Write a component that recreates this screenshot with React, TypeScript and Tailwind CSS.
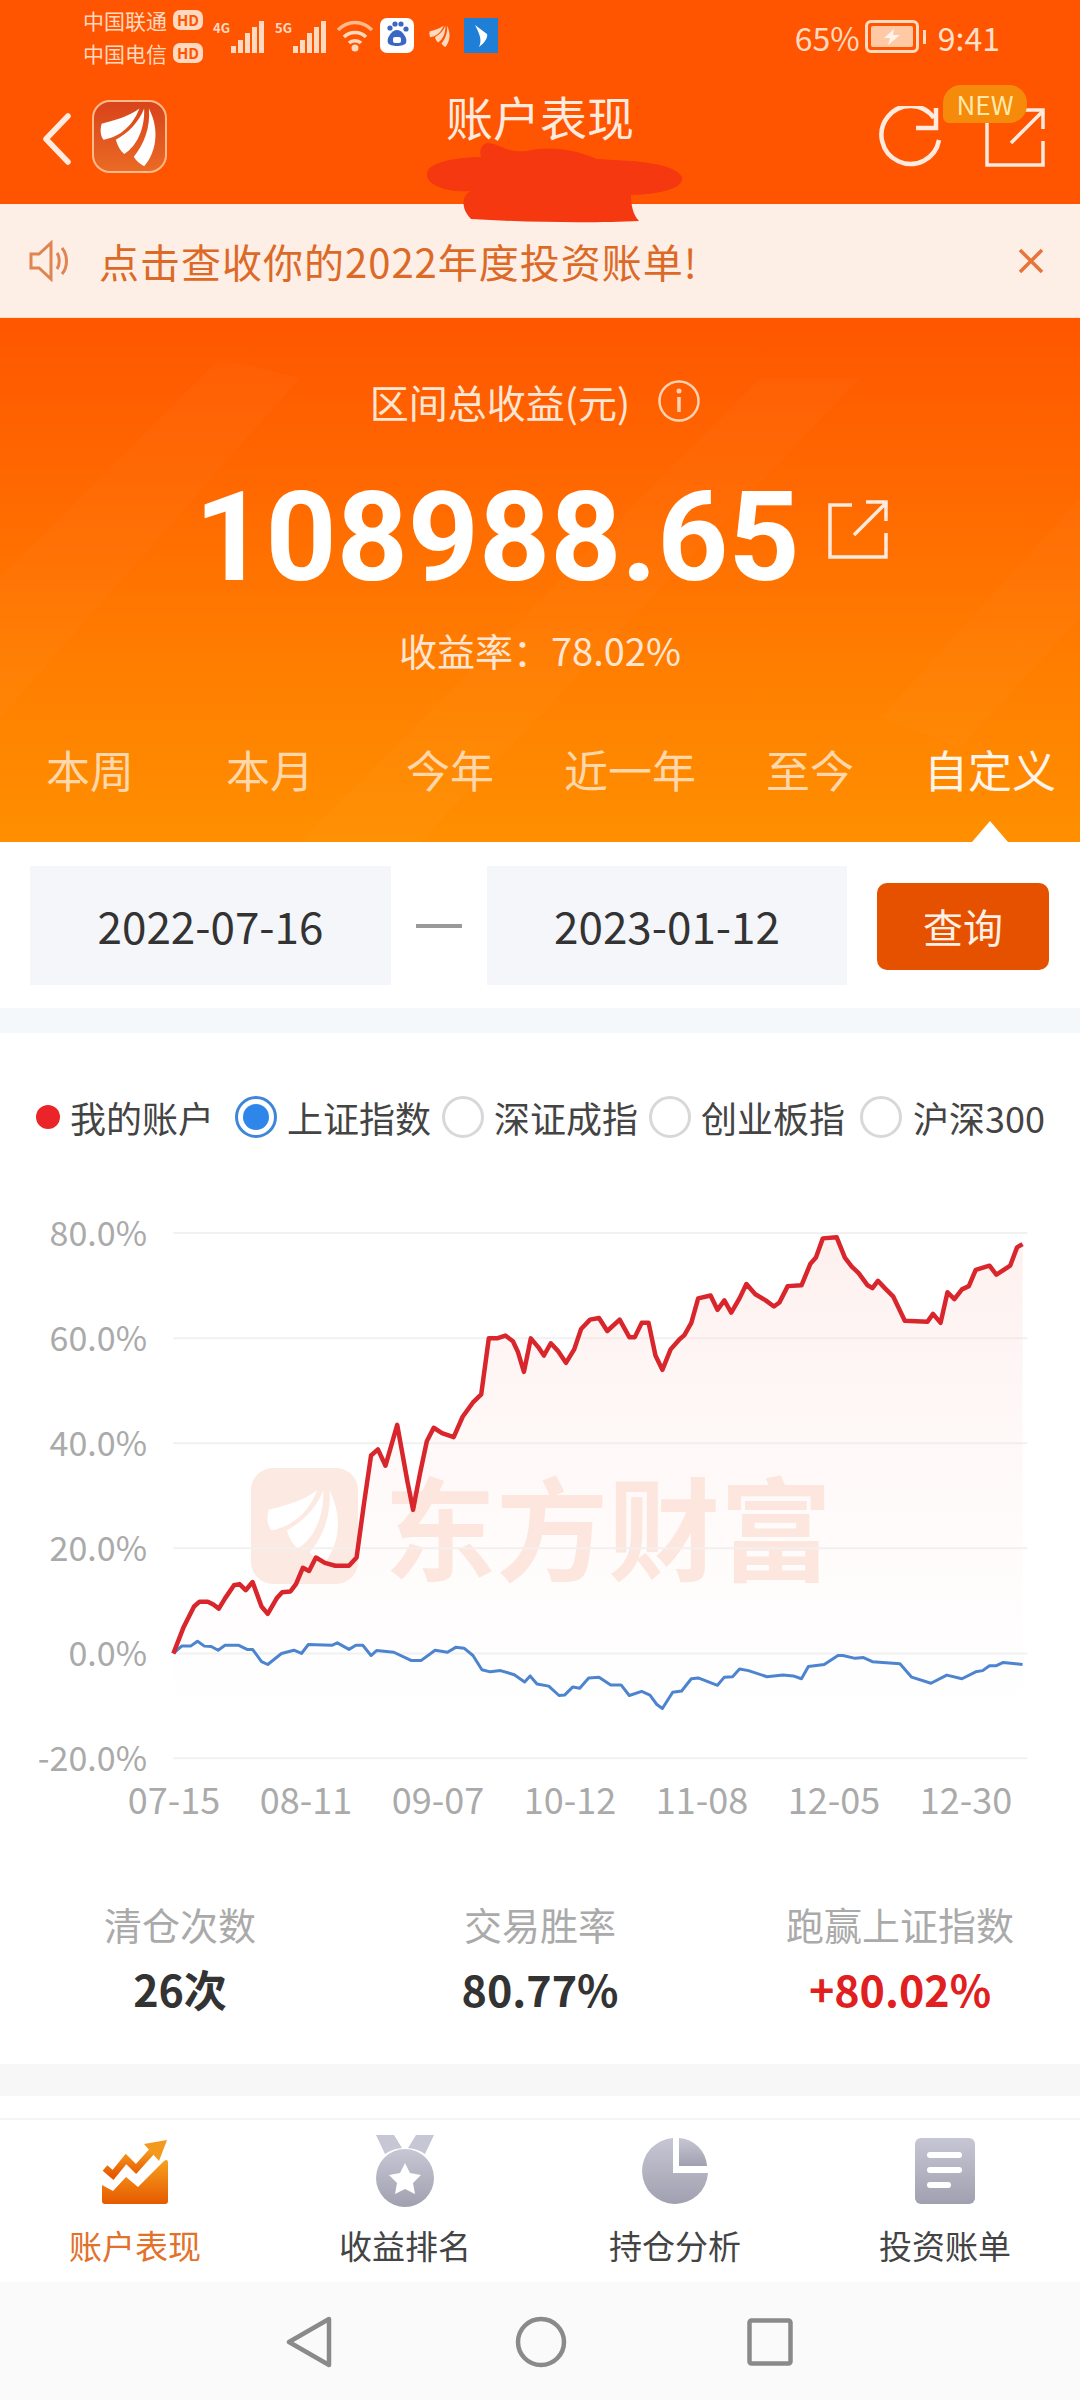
import React from "react";

const RED =
  "250,1160 265,1095 280,1045 288,1033 300,1033 308,1040 316,1050 325,1025 338,993 346,990 355,1005 365,985 378,1045 387,1063 400,1025 408,1010 420,1008 428,990 438,950 447,958 457,925 470,938 485,945 505,945 516,925 527,790 537,675 547,660 558,700 575,600 590,740 598,808 608,720 618,640 628,607 640,620 657,630 670,580 685,545 697,525 708,388 720,388 732,381 743,395 750,420 759,470 769,388 780,410 788,430 798,400 808,418 820,448 832,415 842,365 855,342 868,338 880,370 898,342 912,385 920,385 930,350 940,350 950,430 960,465 972,415 985,390 992,380 1002,350 1012,290 1030,283 1040,318 1050,295 1060,325 1072,290 1082,255 1095,280 1110,295 1122,310 1130,300 1142,260 1162,258 1175,205 1183,190 1193,143 1213,140 1225,190 1235,212 1245,228 1258,258 1265,265 1273,247 1283,265 1295,285 1312,345 1345,347 1353,328 1364,350 1374,275 1384,292 1395,268 1405,260 1415,220 1435,210 1445,232 1465,210 1475,165 1483,157";
const BLUE =
  "250,1160 262,1142 275,1142 285,1130 295,1142 305,1143 315,1152 325,1140 345,1140 357,1150 365,1150 378,1180 387,1187 407,1160 425,1152 436,1160 446,1138 480,1140 488,1134 505,1150 515,1140 525,1140 537,1165 545,1153 570,1157 595,1177 610,1177 630,1152 648,1157 660,1145 672,1147 685,1165 698,1200 710,1205 725,1202 745,1212 760,1230 768,1215 778,1235 795,1240 810,1263 818,1262 830,1242 840,1245 853,1220 868,1218 885,1237 900,1237 912,1263 930,1253 942,1262 952,1285 960,1295 975,1255 988,1252 1002,1222 1012,1220 1040,1238 1050,1218 1062,1217 1072,1198 1085,1202 1112,1217 1135,1213 1150,1215 1162,1222 1172,1192 1195,1187 1215,1165 1222,1165 1240,1172 1252,1170 1265,1180 1305,1185 1322,1218 1350,1233 1373,1213 1395,1222 1415,1205 1425,1202 1435,1190 1445,1190 1455,1182 1483,1187";

const PERIODS = ["本周", "本月", "今年", "近一年", "至今", "自定义"];
const Y_LABELS = ["80.0%", "60.0%", "40.0%", "20.0%", "0.0%", "-20.0%"];
const X_LABELS = ["07-15", "08-11", "09-07", "10-12", "11-08", "12-05", "12-30"];
const GRID = [130, 388, 645, 902, 1160, 1417];

function Signal() {
  return (
    <svg width="33" height="32" viewBox="0 0 33 32" fill="#ffd9c0">
      <rect x="0" y="25" width="5" height="7" />
      <rect x="7" y="19" width="5" height="13" />
      <rect x="14" y="12" width="5" height="20" />
      <rect x="21" y="6" width="5" height="26" />
      <rect x="28" y="0" width="5" height="32" />
    </svg>
  );
}

function HdBadge() {
  return (
    <span className="w-[30px] h-[20px] rounded-[7px] bg-[#ffd9c0] text-[#ff5500] text-[15px] leading-[20px] font-bold text-center">
      HD
    </span>
  );
}

function ShareIcon({ size, sw }: { size: number; sw: number }) {
  return (
    <svg width={size} height={size} viewBox="0 0 60 60" fill="none" stroke="currentColor" strokeWidth={sw}>
      <path d="M24 6H2V58H58V34" />
      <path d="M26 36L58 4M38 3H58V22" />
    </svg>
  );
}

function FeatherLogo({ fill }: { fill: string }) {
  return (
    <svg viewBox="0 0 75 73" className="w-full h-full" fill={fill}>
      <path d="M48 7C36 16 20 20 8 23C6 30 7 36 10 40C24 38 40 28 48 7Z" />
      <path d="M53 7C47 22 36 33 23 40C25 47 28 52 32 55C44 48 54 30 53 7Z" />
      <path d="M58 7C60 28 52 46 42 58C45 63 49 66 53 68C64 56 71 32 58 7Z" />
    </svg>
  );
}

function StatusBar() {
  return (
    <div className="h-[85px] pl-[83px] pr-[80px] flex items-center text-[#ffd9c0]">
      <div className="flex flex-col gap-[10px] -mt-[12px]">
        <div className="flex items-center gap-[5px] h-[23px]">
          <span className="text-[21px] leading-[23px] w-[85px]">中国联通</span>
          <HdBadge />
        </div>
        <div className="flex items-center gap-[5px] h-[23px]">
          <span className="text-[21px] leading-[23px] w-[85px]">中国电信</span>
          <HdBadge />
        </div>
      </div>
      <div className="flex items-start ml-[10px] -mt-[14px]">
        <span className="text-[13px] leading-[14px] font-bold mt-[2px] w-[18px]">4G</span>
        <div className="mt-[2px]"><Signal /></div>
        <span className="text-[13px] leading-[14px] font-bold mt-[2px] ml-[11px] w-[18px]">5G</span>
        <div className="mt-[2px]"><Signal /></div>
      </div>
      <svg width="38" height="34" viewBox="0 0 38 34" fill="none" className="ml-[10px] -mt-[14px]" stroke="#ffb98c" strokeWidth="3.5">
        <path d="M2 11C12 1 26 1 36 11" />
        <path d="M8 18C14 12 24 12 30 18" stroke="#ffd9c0" />
        <path d="M13 24C16 21 22 21 25 24" stroke="#ffd9c0" />
        <circle cx="19" cy="29" r="3.5" fill="#ffd9c0" stroke="none" />
      </svg>
      <div className="w-[34px] h-[35px] ml-[6px] -mt-[14px] rounded-[7px] bg-white">
        <svg viewBox="0 0 34 35" className="w-full h-full" fill="#3b67c4">
          <circle cx="10" cy="10" r="2.6" />
          <circle cx="15" cy="6" r="2.6" />
          <circle cx="21" cy="6" r="2.6" />
          <circle cx="26" cy="11" r="2.6" />
          <path d="M17 12C22 12 28 20 26 25C24 29 10 29 8 25C6 20 12 12 17 12Z" />
          <rect x="13" y="19" width="8" height="6" rx="2" fill="#ffffff" />
        </svg>
      </div>
      <div className="w-[26px] h-[28px] ml-[13px] -mt-[14px]">
        <FeatherLogo fill="#ffd9c0" />
      </div>
      <div className="w-[34px] h-[35px] ml-[11px] -mt-[14px] bg-[#1f7fd6]">
        <svg viewBox="0 0 34 35" className="w-full h-full" fill="#ffffff">
          <path d="M11 7L23 16C24 18 22 24 15 29C17 24 18 20 11 7Z" />
        </svg>
      </div>
      <div className="ml-auto flex items-center -mt-[12px]">
        <span className="text-[32px] leading-[36px] text-[#ffd9c0]">65%</span>
        <div className="ml-[5px] w-[54px] h-[33px] rounded-[6px] border-[3px] border-[#ffd9c0] flex items-center justify-center">
          <div className="w-[42px] h-[21px] rounded-[2px] bg-[#ffc9a6] flex items-center justify-center">
            <svg width="22" height="16" viewBox="0 0 22 16" fill="#fff3ea">
              <path d="M13 0L3 9H9L7 16L19 6H12Z" />
            </svg>
          </div>
        </div>
        <div className="ml-[4px] w-[3px] h-[14px] bg-[#ffd9c0]" />
        <span className="ml-[12px] text-[32px] leading-[36px] text-[#ffe0cc]">9:41</span>
      </div>
    </div>
  );
}

function NavHeader() {
  return (
    <div className="relative h-[119px] flex items-start pl-[42px] pr-[35px]">
      <svg width="30" height="52" viewBox="0 0 30 52" fill="none" stroke="#ffeadf" strokeWidth="5.5" strokeLinecap="round" strokeLinejoin="round" className="mt-[28px]">
        <path d="M26 3L4 26L26 49" />
      </svg>
      <div className="ml-[20px] mt-[15px] w-[75px] h-[73px] rounded-[18px] border-2 border-[#ffb98c] bg-[linear-gradient(180deg,#d9431a,#ea6a24)] overflow-hidden">
        <FeatherLogo fill="#ffffff" />
      </div>
      <div className="absolute left-0 right-0 top-[5px] text-center text-[47px] leading-[52px] text-[#ffeadf]">账户表现</div>
      <svg width="64" height="64" viewBox="0 0 64 64" fill="none" stroke="#ffeadf" strokeWidth="4.5" className="ml-auto mr-[43px] mt-[21px]">
        <path d="M61 34A29 29 0 1 1 56 12" />
        <path d="M58 2V22H38" />
      </svg>
      <div className="mt-[22px] text-[#ffeadf]">
        <ShareIcon size={60} sw={3.5} />
      </div>
      <div className="absolute left-[943px] top-0 w-[84px] h-[38px] rounded-[18px] rounded-bl-[6px] bg-[#f58a0b] text-[#ffe9a8] text-[26px] leading-[38px] text-center">
        NEW
      </div>
      <svg width="256" height="80" viewBox="0 0 256 80" fill="#f5380f" className="absolute left-[427px] top-[58px] z-10">
        <path d="M60 0C72 0 78 10 100 8C128 2 150 8 170 16C200 18 246 18 255 34C258 48 222 52 204 52C204 62 206 72 212 78C170 80 110 80 44 76C34 66 34 52 44 48C20 50 -2 42 0 30C2 18 34 14 54 14C52 8 54 2 60 0Z" />
      </svg>
    </div>
  );
}

function Notice() {
  return (
    <div className="h-[114px] bg-[#fdeee6] border-b border-[#fbe0cf] pl-[29px] pr-[36px] flex items-center text-[#dc6a26]">
      <svg width="42" height="42" viewBox="0 0 42 42" fill="none" stroke="#e08552" strokeWidth="3">
        <path d="M2 14H10L22 3V39L10 28H2Z" />
        <path d="M28 13C31 17 31 25 28 29" />
        <path d="M33 8C39 15 39 27 33 34" />
      </svg>
      <span className="ml-[28px] text-[40px] leading-[48px] tracking-[1px]">点击查收你的2022年度投资账单!</span>
      <svg width="26" height="26" viewBox="0 0 26 26" stroke="#e8743a" strokeWidth="3.5" className="ml-auto">
        <path d="M2 2L24 24M24 2L2 24" />
      </svg>
    </div>
  );
}

function Hero() {
  return (
    <div className="relative h-[524px] bg-[linear-gradient(180deg,#ff5600_0%,#ff6a00_35%,#ff8000_70%,#ff8f00_100%)] flex flex-col items-center overflow-hidden">
      <svg width="1080" height="524" viewBox="0 0 1080 524" fill="#ffffff" fillOpacity="0.018" className="absolute left-0 top-0">
        <path d="M0 260L220 40L300 60L0 400Z" />
        <path d="M880 400L1080 180V300L960 430Z" />
        <path d="M300 524L760 60L860 60L420 524Z" />
      </svg>
      <div className="relative mt-[61px] h-[44px] flex items-center pr-[10px] text-[#ffe6d4]">
        <span className="text-[39px] leading-[44px]">区间总收益(元)</span>
        <svg width="42" height="42" viewBox="0 0 42 42" fill="none" stroke="#ffd2b3" strokeWidth="2.5" className="ml-[28px]">
          <circle cx="21" cy="21" r="19.5" />
          <path d="M21 17V32" strokeWidth="3.5" />
          <circle cx="21" cy="11" r="2.5" fill="#ffd2b3" stroke="none" />
        </svg>
      </div>
      <div className="relative mt-[53px] h-[124px] flex items-start pl-[2px] text-white">
        <span className="text-[124px] leading-[124px] font-bold font-['Roboto',sans-serif]">108988.65</span>
        <div className="ml-[28px] mt-[23px] text-[#ffeadf]">
          <ShareIcon size={60} sw={3.5} />
        </div>
      </div>
      <div className="relative mt-[28px] text-[38px] leading-[44px] text-[#ffe6d4]">收益率：78.02%</div>
      <div className="relative mt-[71px] w-full grid grid-cols-6">
        {PERIODS.map((p, i) => (
          <div key={p} className={i === 5 ? "text-center text-[44px] leading-[52px] text-[#fff4ea]" : "text-center text-[44px] leading-[52px] text-[#ffd7aa]"}>
            {p}
          </div>
        ))}
      </div>
      <div className="absolute right-[72px] bottom-0 w-0 h-0 border-l-[18px] border-r-[18px] border-b-[21px] border-l-transparent border-r-transparent border-b-white" />
    </div>
  );
}

function DateRow() {
  return (
    <div className="h-[166px] bg-white pl-[30px] pr-[31px] pt-[24px] flex items-start">
      <div className="w-[361px] h-[119px] bg-[#f5f6f9] text-center text-[44px] leading-[119px] text-[#333]">2022-07-16</div>
      <div className="w-[46px] h-[4px] bg-[#999] mx-[25px] mt-[58px]" />
      <div className="w-[360px] h-[119px] bg-[#f5f6f9] text-center text-[44px] leading-[119px] text-[#333]">2023-01-12</div>
      <div className="ml-auto mt-[17px] w-[172px] h-[87px] rounded-[10px] bg-[#e65100] text-center text-[40px] leading-[87px] text-[#fff0e6]">查询</div>
    </div>
  );
}

function Radio({ active }: { active?: boolean }) {
  if (active) {
    return (
      <div className="w-[42px] h-[42px] rounded-full border-[3px] border-[#3f86d8] flex items-center justify-center bg-white">
        <div className="w-[26px] h-[26px] rounded-full bg-[#2f86ea]" />
      </div>
    );
  }
  return <div className="w-[42px] h-[42px] rounded-full border-[3px] border-[#d8d8d8] bg-white" />;
}

function Legend() {
  return (
    <div className="h-[200px] pl-[36px] pt-[63px] flex items-start text-[36px] leading-[42px] text-[#444]">
      <div className="w-[24px] h-[24px] rounded-full bg-[#ea2428] mt-[9px]" />
      <span className="ml-[10px] w-[165px]">我的账户</span>
      <Radio active />
      <span className="ml-[10px] w-[155px]">上证指数</span>
      <Radio />
      <span className="ml-[10px] w-[155px]">深证成指</span>
      <Radio />
      <span className="ml-[10px] w-[159px]">创业板指</span>
      <Radio />
      <span className="ml-[11px] whitespace-nowrap">沪深300</span>
    </div>
  );
}

function Chart() {
  return (
    <div className="flex flex-col">
      <div className="flex h-[544px]">
        <div className="w-[172px] pr-[25px] mt-[-22px] flex flex-col text-right text-[34px] leading-[42px] text-[#aaa]">
          {Y_LABELS.map((l) => (
            <div key={l} className="h-[105px] shrink-0">{l}</div>
          ))}
        </div>
        <div className="relative w-[856px] h-[544px]">
          <div className="absolute left-[79px] top-[235px] w-[107px] h-[116px] rounded-[22px] bg-[#fce9e1] p-[8px]">
            <FeatherLogo fill="#ffffff" />
          </div>
          <div className="absolute left-[212px] top-[230px] text-[112px] leading-[122px] font-bold text-[#fce6dd] whitespace-nowrap">东方财富</div>
          <svg viewBox="248 0 1240 1568" preserveAspectRatio="none" width="854" height="640" className="absolute left-0 top-[-53px] overflow-visible" fill="none">
            <defs>
              <linearGradient id="fillRed" x1="0" y1="0" x2="0" y2="1">
                <stop offset="0" stopColor="#fbdcd8" stopOpacity="0.42" />
                <stop offset="1" stopColor="#fdeeea" stopOpacity="0" />
              </linearGradient>
            </defs>
            {GRID.map((y) => (
              <line key={y} x1="250" x2="1490" y1={y} y2={y} stroke="#f1f1f1" strokeWidth="2" vectorEffect="non-scaling-stroke" />
            ))}
            <polygon points={`${RED} 1483,1330 250,1330`} fill="url(#fillRed)" />
            <polyline points={BLUE} stroke="#4d84cf" strokeWidth="3" strokeLinejoin="round" vectorEffect="non-scaling-stroke" />
            <polyline points={RED} stroke="#d8262c" strokeWidth="4.5" strokeLinejoin="round" vectorEffect="non-scaling-stroke" />
          </svg>
        </div>
      </div>
      <div className="pl-[108px] flex">
        {X_LABELS.map((l) => (
          <div key={l} className="w-[132px] text-center text-[36px] leading-[42px] text-[#aaa]">{l}</div>
        ))}
      </div>
    </div>
  );
}

function Stats() {
  const items = [
    { label: "清仓次数", value: "26次", cls: "text-[#333]" },
    { label: "交易胜率", value: "80.77%", cls: "text-[#333]" },
    { label: "跑赢上证指数", value: "+80.02%", cls: "text-[#e02020]" },
  ];
  return (
    <div className="grid grid-cols-3 mt-[81px]">
      {items.map((it) => (
        <div key={it.label} className="flex flex-col items-center">
          <span className="text-[38px] leading-[48px] text-[#aaa]">{it.label}</span>
          <span className={`mt-[16px] text-[43px] leading-[48px] font-bold ${it.cls}`}>{it.value}</span>
        </div>
      ))}
    </div>
  );
}

function TabIcons({ idx }: { idx: number }) {
  if (idx === 0) {
    return (
      <svg width="66" height="68" viewBox="0 0 66 68">
        <defs>
          <linearGradient id="tabOrange" x1="0" y1="0" x2="0" y2="1">
            <stop offset="0" stopColor="#f7a020" />
            <stop offset="1" stopColor="#e65a00" />
          </linearGradient>
        </defs>
        <path d="M0 48L11 54L24 40L36 50L62 24Q66 21 66 26V64Q66 67 63 67H3Q0 67 0 64Z" fill="url(#tabOrange)" />
        <path d="M3 31L11 38L24 22L34 32L52 12" fill="none" stroke="url(#tabOrange)" strokeWidth="7" />
        <path d="M42 7L65 3L57 24Z" fill="#f39a1c" />
      </svg>
    );
  }
  const fill = `url(#tabGray${idx})`;
  return (
    <svg width="66" height="72" viewBox="0 0 66 72">
      <defs>
        <linearGradient id={`tabGray${idx}`} x1="0" y1="0" x2="0" y2="1">
          <stop offset="0" stopColor="#c6c6d4" />
          <stop offset="1" stopColor="#a0a0b0" />
        </linearGradient>
      </defs>
      {idx === 1 && (
        <>
          <path d="M4 0H22L30 13Q20 14 13 19Z" fill="#c6c6d4" />
          <path d="M44 0H62L53 19Q46 14 36 13Z" fill="#c6c6d4" />
          <circle cx="33" cy="43" r="29" fill={fill} />
          <path d="M33 28L38 38L49 40L41 48L43 59L33 54L23 59L25 48L17 40L28 38Z" fill="#ffffff" />
        </>
      )}
      {idx === 2 && (
        <>
          <path d="M31 3A33 33 0 1 0 66 38L31 38Z" fill={fill} />
          <path d="M37 3A30 30 0 0 1 65 31L37 31Z" fill={fill} />
        </>
      )}
      {idx === 3 && (
        <>
          <rect x="3" y="3" width="60" height="66" rx="6" fill={fill} />
          <rect x="15" y="17" width="35" height="6" rx="3" fill="#ffffff" />
          <rect x="15" y="32" width="35" height="6" rx="3" fill="#ffffff" />
          <rect x="15" y="47" width="24" height="6" rx="3" fill="#ffffff" />
        </>
      )}
    </svg>
  );
}

function BottomTabs() {
  const labels = ["账户表现", "收益排名", "持仓分析", "投资账单"];
  return (
    <div className="h-[164px] bg-white border-t-2 border-[#f5f5f5] grid grid-cols-4">
      {labels.map((l, i) => (
        <div key={l} className="flex flex-col items-center pt-[15px]">
          <div className="h-[72px] flex items-center"><TabIcons idx={i} /></div>
          <span className={i === 0 ? "mt-[17px] text-[33px] leading-[42px] text-[#e2712a]" : "mt-[17px] text-[33px] leading-[42px] text-[#444]"}>{l}</span>
        </div>
      ))}
    </div>
  );
}

function SystemNav() {
  return (
    <div className="h-[118px] bg-[#fafafa] pl-[286px] pt-[34px] flex items-start">
      <svg width="46" height="52" viewBox="0 0 46 52" fill="none" stroke="#8a8a8a" strokeWidth="4.5" strokeLinejoin="round">
        <path d="M43 3V49L3 26Z" />
      </svg>
      <svg width="52" height="52" viewBox="0 0 52 52" fill="none" stroke="#8a8a8a" strokeWidth="4.5" className="ml-[183px]">
        <circle cx="26" cy="26" r="23" />
      </svg>
      <svg width="46" height="48" viewBox="0 0 46 48" fill="none" stroke="#8a8a8a" strokeWidth="4.5" className="ml-[180px] mt-[2px]">
        <rect x="2.5" y="2.5" width="41" height="43" rx="2" />
      </svg>
    </div>
  );
}

export default function App() {
  return (
    <div className="w-[1080px] h-[2400px] overflow-hidden bg-white font-['Noto_Sans_CJK_SC','Roboto',sans-serif]">
      <div className="bg-[#ff5500]">
        <StatusBar />
        <NavHeader />
      </div>
      <Notice />
      <Hero />
      <DateRow />
      <div className="h-[25px] bg-[#f5f8fa]" />
      <div className="h-[1031px] bg-white">
        <Legend />
        <Chart />
        <Stats />
      </div>
      <div className="h-[32px] bg-[#f7f7f7]" />
      <div className="h-[22px] bg-white" />
      <BottomTabs />
      <SystemNav />
    </div>
  );
}
